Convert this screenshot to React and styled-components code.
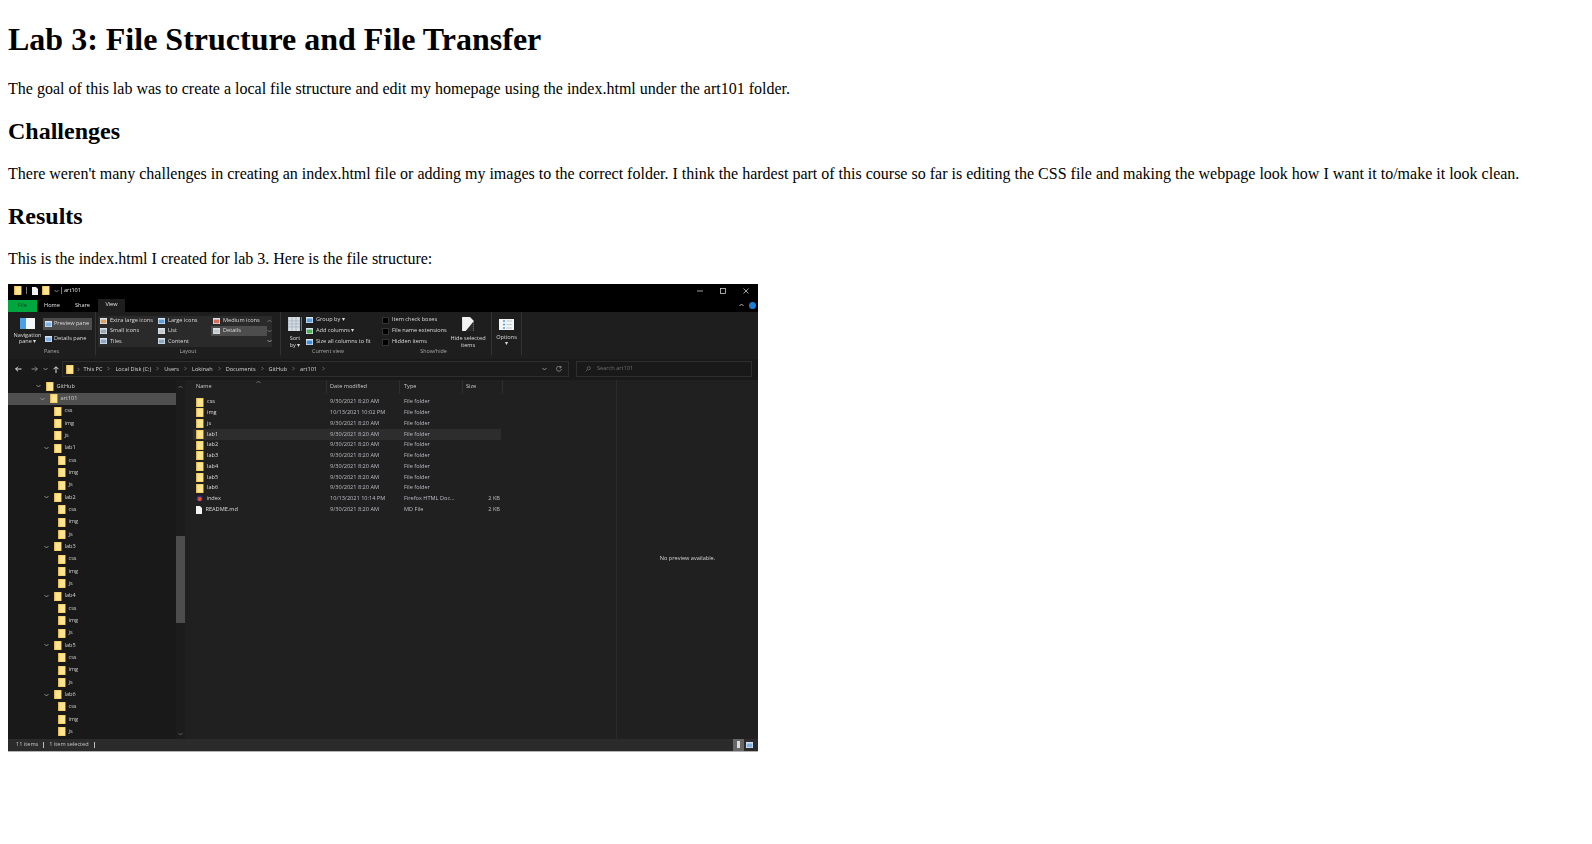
import styled, { createGlobalStyle } from 'styled-components'

const GlobalStyle = createGlobalStyle`
	body {
		margin: 0 8px 8px;
		background: #fff;
		color: #000;
		font-family: 'Liberation Serif', 'Times New Roman', serif;
		font-size: 16px;
	}
`

const H1_Title = styled.h1`
	font-size: 32px;
	font-weight: bold;
	margin: 21.44px 0;
`
const H2_Title = styled.h2`
	font-size: 24px;
	font-weight: bold;
	margin: 19.92px 0;
`
const P_Text = styled.p`
	margin: 16px 0;
`

const Div_Window = styled.div`
	width: 750px;
	height: 468px;
	display: flex;
	flex-direction: column;
	background: #202020;
	border-bottom: 1px solid #b4b4b4;
	box-sizing: border-box;
	overflow: hidden;
	color: #dcdcdc;
	font-family: 'Open Sans', 'Liberation Sans', sans-serif;
	font-size: 5.6px;
	line-height: 1;
	white-space: nowrap;
	filter: blur(0.45px);
`

const Div_TitleBar = styled.div`
	height: 14px;
	flex: none;
	display: flex;
	align-items: center;
	background: #000;
	padding: 0 6px;
`
const Span_TitleSep = styled.span`
	width: 1px;
	height: 7px;
	background: #777;
	margin: 0 ${(p) => p.$right || 4}px 0 ${(p) => p.$left || 4}px;
`
const Span_TitleText = styled.span`
	color: #e8e8e8;
`
const Div_TitleIcons = styled.div`
	display: flex;
	align-items: center;
	gap: 4.5px;
`
const Div_WinControls = styled.div`
	margin-left: auto;
	display: flex;
	gap: 17px;
	align-items: center;
	padding-right: 3px;
`

const Div_TabBar = styled.div`
	height: 14px;
	flex: none;
	display: flex;
	align-items: flex-end;
	background: #000;
`
const Div_Tab = styled.div`
	width: ${(p) => p.$width}px;
	height: ${(p) => (p.$active ? 13 : 11.5)}px;
	display: flex;
	align-items: center;
	justify-content: center;
	background: ${(p) => (p.$file ? '#00a63e' : p.$active ? '#1e1e1e' : 'transparent')};
	color: ${(p) => (p.$file ? '#0b3f1d' : '#e4e4e4')};
`
const Div_TabRight = styled.div`
	margin-left: auto;
	height: 13px;
	display: flex;
	align-items: center;
	gap: 5px;
	padding-right: 2px;
`
const Span_Help = styled.span`
	width: 7px;
	height: 7px;
	border-radius: 50%;
	background: #1b7fd6;
`

const Div_Ribbon = styled.div`
	height: 47px;
	flex: none;
	display: flex;
	background: #1e1e1e;
`
const Div_Group = styled.div`
	width: ${(p) => p.$width}px;
	flex: none;
	display: flex;
	flex-direction: column;
	box-sizing: border-box;
	border-right: 1px solid ${(p) => (p.$noLine ? 'transparent' : '#333')};
	margin-bottom: 4px;
`
const Div_GroupBody = styled.div`
	height: 37px;
	flex: none;
	display: flex;
	padding-left: ${(p) => p.$left || 0}px;
`
const Div_GroupLabel = styled.div`
	flex: 1;
	display: flex;
	align-items: center;
	justify-content: center;
	color: #a8a8a8;
	font-size: 5.4px;
`
const Div_BigButton = styled.div`
	width: ${(p) => p.$width}px;
	flex: none;
	display: flex;
	flex-direction: column;
	align-items: center;
	margin-left: ${(p) => (p.$push ? 'auto' : 0)};
	margin-right: ${(p) => (p.$push ? 3 : 0)}px;
	padding-top: ${(p) => p.$top || 5}px;
	text-align: center;
	line-height: 6.6px;
	svg {
		margin-bottom: ${(p) => p.$iconGap || 4}px;
	}
`
const Div_PaneButtons = styled.div`
	width: 49px;
	padding-top: 6px;
	display: flex;
	flex-direction: column;
	gap: 3px;
`
const Div_PaneButton = styled.div`
	height: 12px;
	display: flex;
	align-items: center;
	gap: 2px;
	padding-left: 2px;
	background: ${(p) => (p.$active ? '#4d4d4d' : 'transparent')};
`
const Div_Gallery = styled.div`
	display: flex;
	height: 31px;
	margin-top: 4px;
	background: #2a2a2a;
`
const Div_GalleryGrid = styled.div`
	display: grid;
	grid-template-columns: 58px 55px 56px;
	grid-auto-rows: 10.33px;
`
const Div_GalleryItem = styled.div`
	display: flex;
	align-items: center;
	gap: 3px;
	padding-left: 2px;
	background: ${(p) => (p.$active ? '#4d4d4d' : 'transparent')};
`
const Div_GalleryArrows = styled.div`
	width: 5px;
	display: flex;
	flex-direction: column;
	align-items: center;
	justify-content: space-around;
`
const Div_OptionList = styled.div`
	padding-top: 3px;
	display: flex;
	flex-direction: column;
`
const Div_OptionRow = styled.div`
	height: 11px;
	display: flex;
	align-items: center;
	gap: 3px;
`
const Span_Check = styled.span`
	width: 7px;
	height: 7px;
	box-sizing: border-box;
	background: #000;
	border: 0.5px solid #333;
`

const Div_AddressRow = styled.div`
	height: 21px;
	flex: none;
	display: flex;
	align-items: center;
	background: #191919;
`
const Div_NavIcons = styled.div`
	width: 54px;
	flex: none;
	display: flex;
	align-items: center;
	gap: 5px;
	padding-left: 7px;
	box-sizing: border-box;
	svg:first-child {
		margin-right: 4px;
	}
`
const Div_AddressBox = styled.div`
	width: 507px;
	height: 16px;
	flex: none;
	box-sizing: border-box;
	display: flex;
	align-items: center;
	padding: 0 3px;
	border: 1px solid #2e2e2e;
	background: #1b1b1b;
`
const Span_Crumb = styled.span`
	color: #d4d4d4;
`
const Span_CrumbSep = styled.span`
	display: inline-flex;
	margin: 0 ${(p) => (p.$first ? 4 : 5)}px 0 ${(p) => (p.$first ? 3 : 5)}px;
`
const Div_AddressEnd = styled.div`
	margin-left: auto;
	display: flex;
	align-items: center;
	gap: 9px;
	padding-right: 3px;
`
const Div_SearchBox = styled.div`
	width: 176px;
	height: 16px;
	flex: none;
	margin-left: 7px;
	box-sizing: border-box;
	display: flex;
	align-items: center;
	gap: 6px;
	padding-left: 8px;
	border: 1px solid #2e2e2e;
	color: #6f6f6f;
`

const Div_Content = styled.div`
	flex: 1;
	min-height: 0;
	display: flex;
`
const Div_Sidebar = styled.div`
	width: 168px;
	flex: none;
	padding-top: 0.8px;
	background: #191919;
	overflow: hidden;
`
const Div_TreeRow = styled.div`
	height: 12.33px;
	display: flex;
	align-items: center;
	box-sizing: border-box;
	padding-left: ${(p) => 26 + p.$depth * 4}px;
	background: ${(p) => (p.$selected ? '#4f4f4f' : 'transparent')};
	color: #d0d0d0;
`
const Span_Chevron = styled.span`
	width: 12px;
	flex: none;
	display: flex;
	padding-left: 2px;
	box-sizing: border-box;
`
const Span_TreeName = styled.span`
	margin-left: 3px;
`
const Div_Scrollbar = styled.div`
	width: 9px;
	flex: none;
	display: flex;
	flex-direction: column;
	align-items: center;
	padding: 5px 0 3px;
	box-sizing: border-box;
	background: #1c1c1c;
`
const Div_ScrollThumb = styled.div`
	width: 100%;
	height: 87px;
	margin: 147px 0 auto;
	background: #4d4d4d;
`

const Div_Files = styled.div`
	width: 431px;
	flex: none;
	background: #202020;
`
const Div_FileHeader = styled.div`
	height: 14px;
	display: grid;
	grid-template-columns: 134px 73px 63px 40px;
	margin-left: 8px;
	color: #c8c8c8;
`
const Div_HeaderCell = styled.div`
	position: relative;
	display: flex;
	align-items: center;
	padding-left: ${(p) => p.$left || 3}px;
	border-right: 1px solid #2e2e2e;
`
const Span_SortCaret = styled.span`
	position: absolute;
	left: 63px;
	top: 0;
`
const Div_FileList = styled.div`
	margin: 3.3px 0 0 8px;
	width: 308px;
`
const Div_FileRow = styled.div`
	height: 10.75px;
	display: grid;
	grid-template-columns: 134px 73px 63px 38px;
	align-items: center;
	background: ${(p) => (p.$selected ? '#2d2d2d' : 'transparent')};
	color: #c4c4c4;
`
const Div_FileName = styled.div`
	display: flex;
	align-items: center;
	gap: 3.5px;
	padding-left: 3px;
	color: #dcdcdc;
`
const Div_FileCell = styled.div`
	padding-left: ${(p) => p.$left || 3}px;
	color: #bdbdc6;
`
const Div_FileSize = styled.div`
	text-align: right;
	padding-right: 1px;
	color: #bdbdc6;
`

const Div_Preview = styled.div`
	flex: 1;
	display: flex;
	align-items: center;
	justify-content: center;
	border-left: 1px solid #2b2b2b;
	color: #d4d4d4;
`

const Div_StatusBar = styled.div`
	height: 12px;
	flex: none;
	display: flex;
	align-items: center;
	padding-left: 8px;
	background: #2b2b2b;
	color: #c8c8c8;
`
const Span_StatusSep = styled.span`
	width: 1px;
	height: 6px;
	background: #bbb;
	margin: 0 5px;
`
const Div_ViewButtons = styled.div`
	margin-left: auto;
	height: 100%;
	display: flex;
	align-items: center;
	padding-right: 3px;
`
const Div_ViewButton = styled.div`
	width: 11px;
	height: 100%;
	display: flex;
	align-items: center;
	justify-content: center;
	background: ${(p) => (p.$active ? '#666' : 'transparent')};
`

const Folder = () => (
	<svg width="7.5" height="9" viewBox="0 0 9 10" preserveAspectRatio="none" style={{ flex: 'none' }}>
		<rect width="9" height="10" fill="#e9b949" />
		<rect x="1.5" y="0.5" width="7" height="9" fill="#ffe491" />
	</svg>
)

const Chevron = ({ color = '#9a9a9a', up }) => (
	<svg width="5" height="4" viewBox="0 0 5 4" style={{ flex: 'none' }}>
		<path
			d={up ? 'M0.5 3 L2.5 1 L4.5 3' : 'M0.5 1 L2.5 3 L4.5 1'}
			stroke={color}
			strokeWidth="0.9"
			fill="none"
		/>
	</svg>
)

const CrumbArrow = () => (
	<svg width="3" height="5" viewBox="0 0 3 5">
		<path d="M0.5 0.8 L2.2 2.5 L0.5 4.2" stroke="#8c8c8c" strokeWidth="0.7" fill="none" />
	</svg>
)

const Arrow = ({ left, color = '#e0e0e0' }) => (
	<svg width="7" height="6" viewBox="0 0 7 6" style={{ transform: left ? 'none' : 'scaleX(-1)', flex: 'none' }}>
		<path d="M0.5 3 H6.5 M3 0.7 L0.7 3 L3 5.3" stroke={color} strokeWidth="1" fill="none" />
	</svg>
)

const TinyIcon = ({ color = '#7fb2e6', width = 7 }) => (
	<svg width={width} height="6" viewBox="0 0 7 6" style={{ flex: 'none' }}>
		<rect width="7" height="6" fill="#d8e4f0" />
		<rect x="0.7" y="1.5" width="5.6" height="3.8" fill={color} />
	</svg>
)

const NavPaneIcon = () => (
	<svg width="15" height="11" viewBox="0 0 15 11">
		<rect width="15" height="11" fill="#f4f6f8" />
		<rect width="6" height="11" fill="#4a9fe8" />
	</svg>
)
const SortIcon = () => (
	<svg width="14" height="15" viewBox="0 0 14 15">
		<rect width="12" height="15" fill="#d7dee6" />
		<path d="M0 4H12M0 7H12M0 10H12M4 0V15M8 0V15" stroke="#8b99a8" strokeWidth="0.5" />
		<path d="M13.5 0V15" stroke="#3f8fd8" strokeWidth="1" />
	</svg>
)
const HideIcon = () => (
	<svg width="12" height="15" viewBox="0 0 12 15">
		<path d="M0 0H8L12 4V15H0Z" fill="#f2f2f2" />
		<path d="M12 4V15H3Z" fill="#2a2a2a" />
		<path d="M11.5 5V14.5" stroke="#3f8fd8" strokeWidth="0.8" strokeDasharray="1 1" />
	</svg>
)
const OptionsIcon = () => (
	<svg width="15" height="11" viewBox="0 0 15 11">
		<rect width="15" height="11" fill="#f2f5f8" />
		<path d="M4 2H6M4 5.5H6M4 9H6" stroke="#4a9fe8" strokeWidth="1.4" />
		<path d="M7.5 2H13M7.5 5.5H13M7.5 9H13" stroke="#9aa4ae" strokeWidth="0.6" />
	</svg>
)
const PageIcon = () => (
	<svg width="6" height="8" viewBox="0 0 6 8" style={{ flex: 'none' }}>
		<path d="M0 0H4L6 2V8H0Z" fill="#f2f2f2" />
	</svg>
)
const BrowserIcon = () => (
	<svg width="7" height="7" viewBox="0 0 7 7" style={{ flex: 'none' }}>
		<circle cx="3.5" cy="3.5" r="3" fill="#3a2a8c" />
		<circle cx="3.7" cy="4" r="2" fill="#e8562a" />
	</svg>
)

const galleryItems = [
	['Extra large icons', '#e0a060'],
	['Large icons', '#5aa0e0'],
	['Medium icons', '#d87060'],
	['Small icons', '#a0a8b0'],
	['List', '#c8c8c8'],
	['Details', '#c8c8c8'],
	['Tiles', '#8fa8c0'],
	['Content', '#8fa8c0'],
]

const crumbs = ['This PC', 'Local Disk (C:)', 'Users', 'Lokinah', 'Documents', 'GitHub', 'art101']

const subFolders = (depth) => [
	{ name: 'css', depth },
	{ name: 'img', depth },
	{ name: 'js', depth },
]
const treeRows = [
	{ name: 'GitHub', depth: 0, open: true },
	{ name: 'art101', depth: 1, open: true, selected: true },
	...subFolders(2),
	...[1, 2, 3, 4, 5, 6].flatMap((n) => [
		{ name: `lab${n}`, depth: 2, open: true },
		...subFolders(3),
	]),
]

const folderDate = '9/30/2021 8:20 AM'
const files = [
	{ name: 'css', date: folderDate },
	{ name: 'img', date: '10/13/2021 10:02 PM' },
	{ name: 'js', date: folderDate },
	{ name: 'lab1', date: folderDate, selected: true },
	{ name: 'lab2', date: folderDate },
	{ name: 'lab3', date: folderDate },
	{ name: 'lab4', date: folderDate },
	{ name: 'lab5', date: folderDate },
	{ name: 'lab6', date: folderDate },
	{ name: 'index', date: '10/13/2021 10:14 PM', type: 'Firefox HTML Doc...', size: '2 KB', icon: <BrowserIcon /> },
	{ name: 'README.md', date: folderDate, type: 'MD File', size: '2 KB', icon: <PageIcon /> },
]

const ExplorerShot = () => {
	return (
		<Div_Window role="img" aria-label="File explorer showing the art101 folder">
			<Div_TitleBar>
				<Folder />
				<Span_TitleSep $right={5} />
				<Div_TitleIcons>
					<PageIcon />
					<Folder />
					<Chevron />
				</Div_TitleIcons>
				<Span_TitleSep $left={2} $right={2} />
				<Span_TitleText>art101</Span_TitleText>
				<Div_WinControls>
					<svg width="6" height="6" viewBox="0 0 6 6">
						<path d="M0 3H6" stroke="#ccc" strokeWidth="0.8" />
					</svg>
					<svg width="6" height="6" viewBox="0 0 6 6">
						<rect x="0.5" y="0.5" width="5" height="5" stroke="#ccc" strokeWidth="0.8" fill="none" />
					</svg>
					<svg width="6" height="6" viewBox="0 0 6 6">
						<path d="M0.5 0.5L5.5 5.5M5.5 0.5L0.5 5.5" stroke="#ccc" strokeWidth="0.8" />
					</svg>
				</Div_WinControls>
			</Div_TitleBar>

			<Div_TabBar>
				<Div_Tab $file $width={29}>File</Div_Tab>
				<Div_Tab $width={30}>Home</Div_Tab>
				<Div_Tab $width={31}>Share</Div_Tab>
				<Div_Tab $active $width={27}>View</Div_Tab>
				<Div_TabRight>
					<Chevron up color="#ccc" />
					<Span_Help />
				</Div_TabRight>
			</Div_TabBar>

			<Div_Ribbon>
				<Div_Group $width={88}>
					<Div_GroupBody $left={4}>
						<Div_BigButton $width={31} $top={6} $iconGap={3}>
							<NavPaneIcon />
							Navigation
							<br />
							pane ▾
						</Div_BigButton>
						<Div_PaneButtons>
							<Div_PaneButton $active>
								<TinyIcon />
								Preview pane
							</Div_PaneButton>
							<Div_PaneButton>
								<TinyIcon />
								Details pane
							</Div_PaneButton>
						</Div_PaneButtons>
					</Div_GroupBody>
					<Div_GroupLabel>Panes</Div_GroupLabel>
				</Div_Group>

				<Div_Group $width={185}>
					<Div_GroupBody $left={2}>
						<Div_Gallery>
							<Div_GalleryGrid>
								{galleryItems.map(([label, color]) => (
									<Div_GalleryItem key={label} $active={label === 'Details'}>
										<TinyIcon color={color} />
										{label}
									</Div_GalleryItem>
								))}
							</Div_GalleryGrid>
							<Div_GalleryArrows>
								<Chevron up color="#777" />
								<Chevron color="#777" />
								<Chevron color="#aaa" />
							</Div_GalleryArrows>
						</Div_Gallery>
					</Div_GroupBody>
					<Div_GroupLabel>Layout</Div_GroupLabel>
				</Div_Group>

				<Div_Group $width={95} $noLine>
					<Div_GroupBody $left={3}>
						<Div_BigButton $width={22}>
							<SortIcon />
							Sort
							<br />
							by ▾
						</Div_BigButton>
						<Div_OptionList>
							<Div_OptionRow>
								<TinyIcon color="#5aa0e0" />
								Group by ▾
							</Div_OptionRow>
							<Div_OptionRow>
								<TinyIcon color="#4caf50" />
								Add columns ▾
							</Div_OptionRow>
							<Div_OptionRow>
								<TinyIcon color="#3f8fd8" />
								Size all columns to fit
							</Div_OptionRow>
						</Div_OptionList>
					</Div_GroupBody>
					<Div_GroupLabel>Current view</Div_GroupLabel>
				</Div_Group>

				<Div_Group $width={116}>
					<Div_GroupBody $left={6}>
						<Div_OptionList>
							<Div_OptionRow>
								<Span_Check />
								Item check boxes
							</Div_OptionRow>
							<Div_OptionRow>
								<Span_Check />
								File name extensions
							</Div_OptionRow>
							<Div_OptionRow>
								<Span_Check />
								Hidden items
							</Div_OptionRow>
						</Div_OptionList>
						<Div_BigButton $width={40} $push>
							<HideIcon />
							Hide selected
							<br />
							items
						</Div_BigButton>
					</Div_GroupBody>
					<Div_GroupLabel>Show/hide</Div_GroupLabel>
				</Div_Group>

				<Div_Group $width={30}>
					<Div_GroupBody>
						<Div_BigButton $width={29} $top={7} $iconGap={4}>
							<OptionsIcon />
							Options
							<br />▾
						</Div_BigButton>
					</Div_GroupBody>
				</Div_Group>
			</Div_Ribbon>

			<Div_AddressRow>
				<Div_NavIcons>
					<Arrow left />
					<Arrow color="#8a8a8a" />
					<Chevron />
					<svg width="6" height="7" viewBox="0 0 6 7">
						<path d="M3 7V1M0.5 3.2L3 0.7L5.5 3.2" stroke="#e0e0e0" strokeWidth="1" fill="none" />
					</svg>
				</Div_NavIcons>
				<Div_AddressBox>
					<Folder />
					<Span_CrumbSep $first>
						<CrumbArrow />
					</Span_CrumbSep>
					{crumbs.map((crumb) => (
						<span key={crumb}>
							<Span_Crumb>{crumb}</Span_Crumb>
							<Span_CrumbSep>
								<CrumbArrow />
							</Span_CrumbSep>
						</span>
					))}
					<Div_AddressEnd>
						<Chevron />
						<svg width="6" height="6" viewBox="0 0 6 6">
							<path d="M5 1.2A2.5 2.5 0 1 0 5.5 3M5 0V1.8H3.4" stroke="#a8a8a8" strokeWidth="0.7" fill="none" />
						</svg>
					</Div_AddressEnd>
				</Div_AddressBox>
				<Div_SearchBox>
					<svg width="6" height="6" viewBox="0 0 6 6">
						<circle cx="3.8" cy="2.2" r="1.6" stroke="#7a7a7a" strokeWidth="0.6" fill="none" />
						<path d="M2.6 3.4L0.5 5.5" stroke="#7a7a7a" strokeWidth="0.6" />
					</svg>
					Search art101
				</Div_SearchBox>
			</Div_AddressRow>

			<Div_Content>
				<Div_Sidebar>
					{treeRows.map((row, i) => (
						<Div_TreeRow key={i} $depth={row.depth} $selected={row.selected}>
							<Span_Chevron>{row.open && <Chevron />}</Span_Chevron>
							<Folder />
							<Span_TreeName>{row.name}</Span_TreeName>
						</Div_TreeRow>
					))}
				</Div_Sidebar>
				<Div_Scrollbar>
					<Chevron up color="#666" />
					<Div_ScrollThumb />
					<Chevron color="#666" />
				</Div_Scrollbar>

				<Div_Files>
					<Div_FileHeader>
						<Div_HeaderCell>
							Name
							<Span_SortCaret>
								<Chevron up color="#777" />
							</Span_SortCaret>
						</Div_HeaderCell>
						<Div_HeaderCell>Date modified</Div_HeaderCell>
						<Div_HeaderCell $left={4}>Type</Div_HeaderCell>
						<Div_HeaderCell>Size</Div_HeaderCell>
					</Div_FileHeader>
					<Div_FileList>
						{files.map((file) => (
							<Div_FileRow key={file.name} $selected={file.selected}>
								<Div_FileName>
									{file.icon || <Folder />}
									{file.name}
								</Div_FileName>
								<Div_FileCell>{file.date}</Div_FileCell>
								<Div_FileCell $left={4}>{file.type || 'File folder'}</Div_FileCell>
								<Div_FileSize>{file.size}</Div_FileSize>
							</Div_FileRow>
						))}
					</Div_FileList>
				</Div_Files>

				<Div_Preview>No preview available.</Div_Preview>
			</Div_Content>

			<Div_StatusBar>
				11 items
				<Span_StatusSep />
				1 item selected
				<Span_StatusSep />
				<Div_ViewButtons>
					<Div_ViewButton $active>
						<svg width="3" height="7" viewBox="0 0 3 7">
							<rect width="3" height="7" fill="#ddd" />
						</svg>
					</Div_ViewButton>
					<Div_ViewButton>
						<TinyIcon />
					</Div_ViewButton>
				</Div_ViewButtons>
			</Div_StatusBar>
		</Div_Window>
	)
}

const App = () => {
	return (
		<>
			<GlobalStyle />
			<H1_Title>Lab 3: File Structure and File Transfer</H1_Title>
			<P_Text>
				The goal of this lab was to create a local file structure and edit my homepage using the
				index.html under the art101 folder.
			</P_Text>
			<H2_Title>Challenges</H2_Title>
			<P_Text>
				There weren't many challenges in creating an index.html file or adding my images to the
				correct folder. I think the hardest part of this course so far is editing the CSS file and
				making the webpage look how I want it to/make it look clean.
			</P_Text>
			<H2_Title>Results</H2_Title>
			<P_Text>This is the index.html I created for lab 3. Here is the file structure:</P_Text>
			<ExplorerShot />
		</>
	)
}
export default App
